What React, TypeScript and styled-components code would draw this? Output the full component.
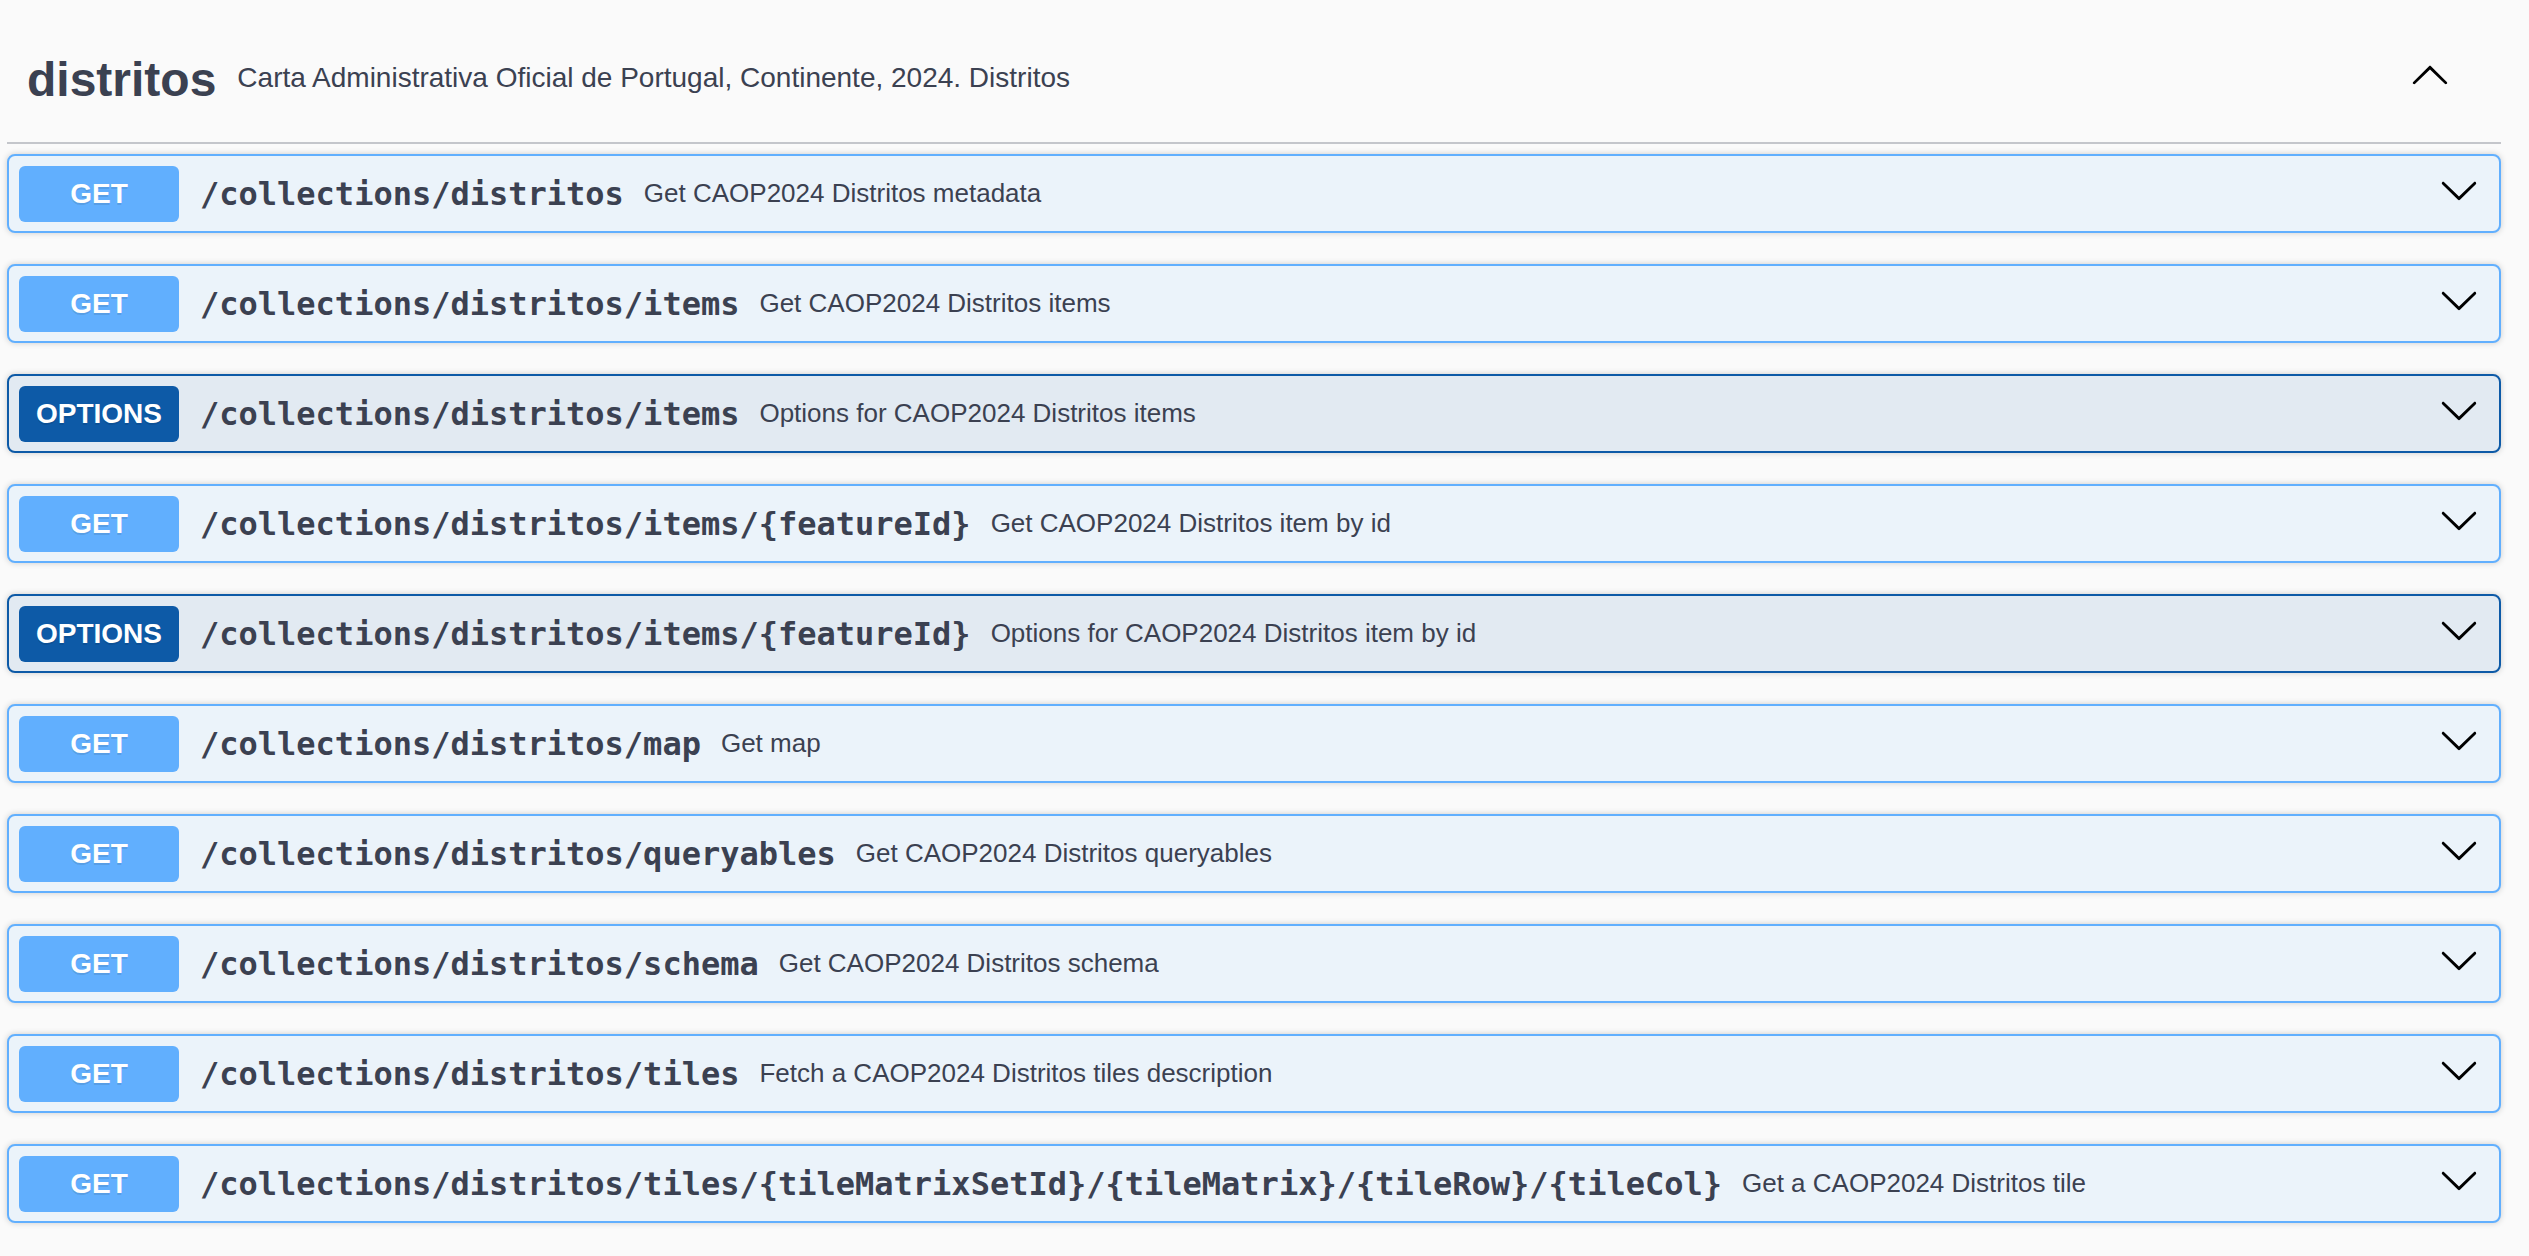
import React from "react";
import styled, { createGlobalStyle } from "styled-components";

const GlobalStyle = createGlobalStyle`
  html, body {
    margin: 0;
    padding: 0;
    background: #fafafa;
  }
  body {
    font-family: "Liberation Sans", Arial, sans-serif;
    color: #3b4151;
  }
`;

type Method = "get" | "options";

const palette: Record<Method, { bg: string; border: string; badge: string }> = {
  get: { bg: "#ebf3fa", border: "#61affe", badge: "#61affe" },
  options: { bg: "#e2eaf2", border: "#0d5aa7", badge: "#0d5aa7" },
};

const Page = styled.div`
  padding: 16px 28px 40px 7px;
`;

const Section = styled.section`
  display: flex;
  flex-direction: column;
`;

const TagHeader = styled.div`
  display: flex;
  align-items: center;
  height: 126px;
  padding: 0 41px 0 20px;
  margin-bottom: 10px;
  border-bottom: 2px solid #c4c6cb;
`;

const TagTitle = styled.h3`
  margin: 0;
  font-family: "Liberation Sans", Arial, sans-serif;
  font-size: 48px;
  font-weight: 700;
  color: #3b4151;
  line-height: normal;
`;

const TagDescription = styled.small`
  flex: 1;
  padding: 0 21px;
  margin-bottom: 2px;
  font-size: 28px;
  font-family: "Liberation Sans", Arial, sans-serif;
  color: #3b4151;
`;

const ToggleButton = styled.button<{ $shift: number }>`
  display: flex;
  align-items: center;
  justify-content: center;
  padding: 0 10px;
  margin: 0 0 ${(p) => p.$shift}px 0;
  border: none;
  background: transparent;
  cursor: pointer;
`;

const OpBlock = styled.div<{ $method: Method }>`
  display: flex;
  align-items: center;
  height: 79px;
  box-sizing: border-box;
  padding: 0 20px 0 10px;
  margin-bottom: 31px;
  border: 2px solid ${(p) => palette[p.$method].border};
  border-radius: 8px;
  background: ${(p) => palette[p.$method].bg};
  box-shadow: 0 0 6px rgba(0, 0, 0, 0.19);
`;

const MethodBadge = styled.span<{ $method: Method }>`
  display: inline-flex;
  align-items: center;
  justify-content: center;
  min-width: 160px;
  height: 56px;
  box-sizing: border-box;
  border-radius: 6px;
  background: ${(p) => palette[p.$method].badge};
  color: #fff;
  font-family: "Liberation Sans", Arial, sans-serif;
  font-size: 28px;
  font-weight: 700;
  text-shadow: 0 2px 0 rgba(0, 0, 0, 0.1);
`;

const PathText = styled.span`
  padding: 0 20px 0 21px;
  font-family: "DejaVu Sans Mono", monospace;
  font-size: 32px;
  font-weight: 700;
  color: #3b4151;
  white-space: nowrap;
`;

const Summary = styled.span`
  flex: 1;
  font-family: "Liberation Sans", Arial, sans-serif;
  font-size: 26px;
  color: #3b4151;
`;

const Chevron = ({ up }: { up?: boolean }) => (
  <svg width="40" height="40" viewBox="0 0 20 20" aria-hidden="true">
    {up ? (
      <path
        fill="#000"
        d="M17.418 14.908c.272.268.709.268.979 0s.271-.701 0-.969l-7.908-7.83c-.27-.268-.707-.268-.979 0l-7.908 7.83c-.27.268-.27.701 0 .969.271.268.709.268.979 0L10 7.767l7.418 7.141z"
      />
    ) : (
      <path
        fill="#000"
        d="M17.418 6.109c.272-.268.709-.268.979 0s.271.701 0 .969l-7.908 7.83c-.27.268-.707.268-.979 0l-7.908-7.830c-.27-.268-.27-.701 0-.969.271-.268.709-.268.979 0L10 13.25l7.418-7.141z"
      />
    )}
  </svg>
);

const ArrowButton = styled.button`
  display: flex;
  align-items: center;
  padding: 0;
  margin: 0 0 7px 0;
  border: none;
  background: transparent;
  cursor: pointer;
`;

const operations: { method: Method; path: string; summary: string }[] = [
  { method: "get", path: "/collections/distritos", summary: "Get CAOP2024 Distritos metadata" },
  { method: "get", path: "/collections/distritos/items", summary: "Get CAOP2024 Distritos items" },
  { method: "options", path: "/collections/distritos/items", summary: "Options for CAOP2024 Distritos items" },
  { method: "get", path: "/collections/distritos/items/{featureId}", summary: "Get CAOP2024 Distritos item by id" },
  { method: "options", path: "/collections/distritos/items/{featureId}", summary: "Options for CAOP2024 Distritos item by id" },
  { method: "get", path: "/collections/distritos/map", summary: "Get map" },
  { method: "get", path: "/collections/distritos/queryables", summary: "Get CAOP2024 Distritos queryables" },
  { method: "get", path: "/collections/distritos/schema", summary: "Get CAOP2024 Distritos schema" },
  { method: "get", path: "/collections/distritos/tiles", summary: "Fetch a CAOP2024 Distritos tiles description" },
  {
    method: "get",
    path: "/collections/distritos/tiles/{tileMatrixSetId}/{tileMatrix}/{tileRow}/{tileCol}",
    summary: "Get a CAOP2024 Distritos tile",
  },
];

export default function App() {
  return (
    <>
      <GlobalStyle />
      <Page>
        <Section>
          <TagHeader>
            <TagTitle>distritos</TagTitle>
            <TagDescription>Carta Administrativa Oficial de Portugal, Continente, 2024. Distritos</TagDescription>
            <ToggleButton $shift={11}>
              <Chevron up />
            </ToggleButton>
          </TagHeader>
          {operations.map((op, i) => (
            <OpBlock key={i} $method={op.method}>
              <MethodBadge $method={op.method}>{op.method.toUpperCase()}</MethodBadge>
              <PathText>{op.path}</PathText>
              <Summary>{op.summary}</Summary>
              <ArrowButton>
                <Chevron />
              </ArrowButton>
            </OpBlock>
          ))}
        </Section>
      </Page>
    </>
  );
}
